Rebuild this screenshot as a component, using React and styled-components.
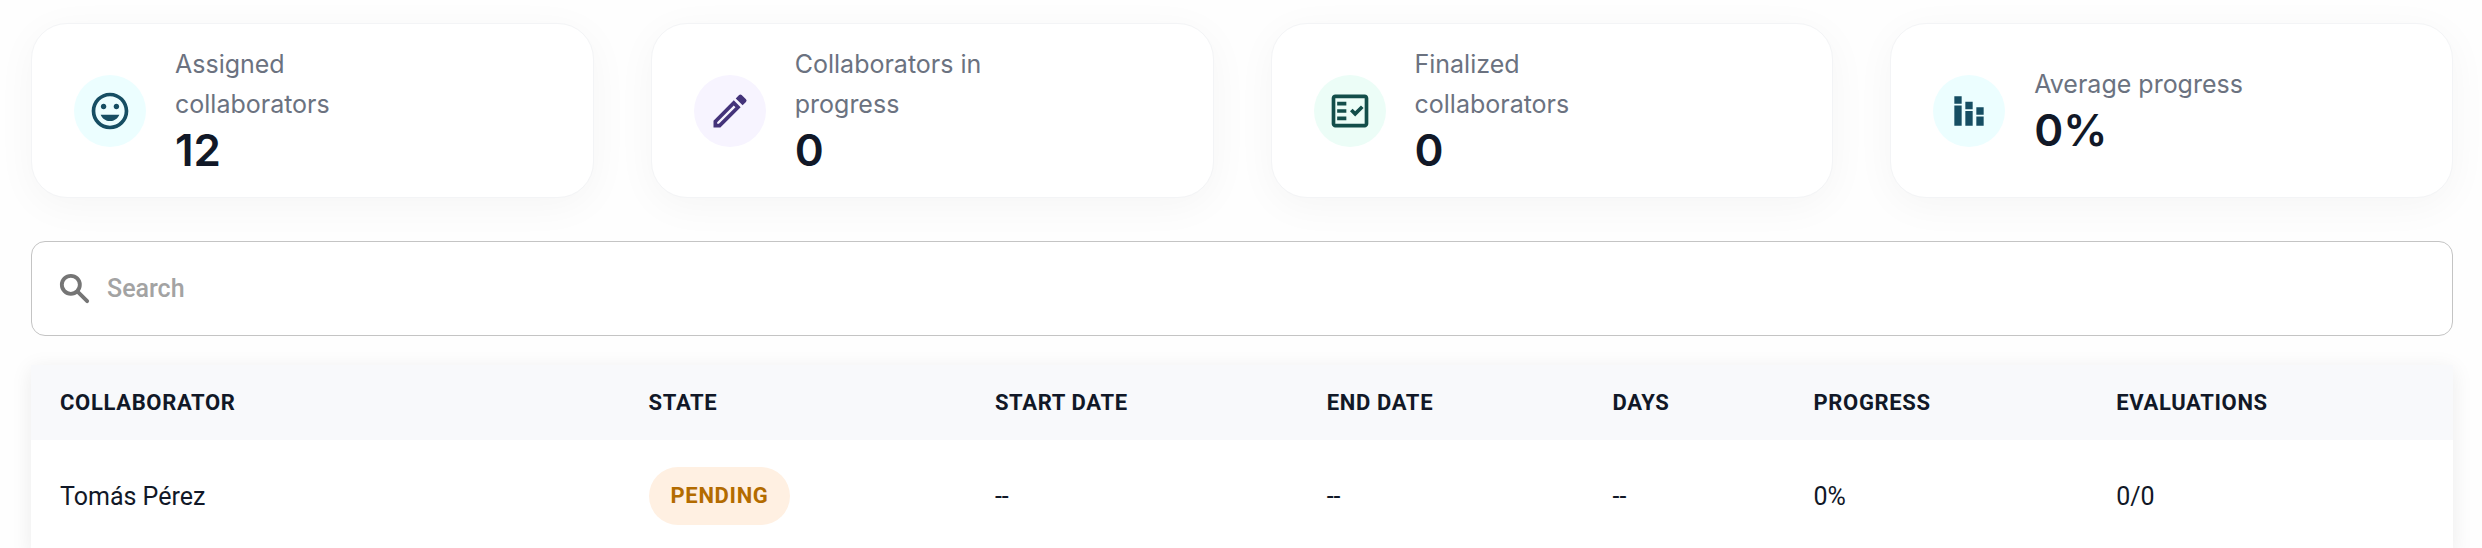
import React from "react"
import styled, { createGlobalStyle } from "styled-components"
import {
  MdMood,
  MdOutlineModeEdit,
  MdOutlineFactCheck,
  MdStackedBarChart,
} from "react-icons/md"

const GlobalStyle = createGlobalStyle`
  * {
    box-sizing: border-box;
  }
  body {
    margin: 0;
    background-color: #fefefe;
    font-family: Roboto, "Liberation Sans", sans-serif;
    color: #111827;
  }
`

const Page = styled.main`
  height: 100vh;
  overflow: hidden;
  padding: 23px 29px 0 31px;
`

const Cards = styled.section`
  display: grid;
  grid-template-columns: repeat(4, 1fr);
  gap: 57px;
  @media (max-width: 1300px) {
    grid-template-columns: repeat(2, 1fr);
  }
`

const Card = styled.article`
  display: flex;
  align-items: center;
  gap: 29px;
  padding: 20px 42px;
  background-color: white;
  border: 1px solid #f3f4f6;
  border-radius: 36px;
  box-shadow: 0 8px 40px rgba(0, 0, 0, 0.04);
`

const CardIcon = styled.span`
  flex: none;
  display: flex;
  align-items: center;
  justify-content: center;
  width: 72px;
  height: 72px;
  border-radius: 50%;
  font-size: 44px;
  color: ${props => props.$tint};
  background-color: ${props => props.$fill};
`

const CardText = styled.div`
  max-width: 224px;
`

const CardLabel = styled.p`
  margin: 0;
  font-family: Inter, "Liberation Sans", sans-serif;
  font-size: 25px;
  line-height: 40px;
  color: #6b7280;
`

const CardValue = styled.p`
  margin: 0;
  font-family: Inter, "Liberation Sans", sans-serif;
  font-size: 44px;
  font-weight: 600;
  line-height: 53px;
`

const SearchBox = styled.label`
  display: flex;
  align-items: center;
  gap: 12px;
  height: 95px;
  margin-top: 43px;
  padding: 0 23px;
  background-color: white;
  border: 1px solid #c4c4c4;
  border-radius: 14px;
  color: #757575;
`

const SearchGlyph = styled.svg`
  flex: none;
  width: 40px;
  height: 40px;
  fill: none;
  stroke: currentColor;
  stroke-width: 2.3;
  stroke-linecap: round;
`

const SearchInput = styled.input`
  flex: 1;
  min-width: 0;
  padding: 0;
  border: 0;
  outline: 0;
  background: none;
  font-family: inherit;
  font-size: 25px;
  font-weight: 500;
  color: #111827;
  &::placeholder {
    color: #a3a3a3;
    opacity: 1;
  }
`

const TableFrame = styled.section`
  margin-top: 29px;
  background-color: white;
  box-shadow: 0 4px 20px rgba(0, 0, 0, 0.08);
`

const Table = styled.table`
  width: 100%;
  table-layout: fixed;
  border-collapse: collapse;
`

const Col = styled.col`
  width: ${props => props.$share};
`

const HeadCell = styled.th`
  height: 75px;
  padding: 0 29px;
  background-color: #f8f9fb;
  font-size: 22px;
  font-weight: 700;
  letter-spacing: 0.03em;
  text-align: left;
`

const Cell = styled.td`
  height: 112px;
  padding: 0 29px;
  font-size: 25px;
`

const Chip = styled.span`
  display: inline-block;
  padding: 0 22px;
  border-radius: 29px;
  background-color: #fff0e2;
  font-size: 22px;
  font-weight: 700;
  letter-spacing: 0.03em;
  line-height: 58px;
  vertical-align: middle;
  color: #b36b00;
`

const stats = [
  { label: "Assigned collaborators", value: "12", Icon: MdMood, tint: "#164e63", fill: "#ecfeff" },
  { label: "Collaborators in progress", value: "0", Icon: MdOutlineModeEdit, tint: "#44337a", fill: "#f7f4ff" },
  { label: "Finalized collaborators", value: "0", Icon: MdOutlineFactCheck, tint: "#134e4a", fill: "#ecfdf7" },
  { label: "Average progress", value: "0%", Icon: MdStackedBarChart, tint: "#164e63", fill: "#ecfeff" },
]

const columns = [
  { title: "COLLABORATOR", share: "24.3%" },
  { title: "STATE", share: "14.3%" },
  { title: "START DATE", share: "13.7%" },
  { title: "END DATE", share: "11.8%" },
  { title: "DAYS", share: "8.3%" },
  { title: "PROGRESS", share: "12.5%" },
  { title: "EVALUATIONS", share: "15.1%" },
]

const rows = [
  {
    name: "Tomás Pérez",
    state: "PENDING",
    start: "--",
    end: "--",
    days: "--",
    progress: "0%",
    evaluations: "0/0",
  },
]

const App = () => (
  <>
    <GlobalStyle />
    <Page>
      <Cards>
        {stats.map(({ label, value, Icon, tint, fill }) => (
          <Card key={label}>
            <CardIcon $tint={tint} $fill={fill}>
              <Icon />
            </CardIcon>
            <CardText>
              <CardLabel>{label}</CardLabel>
              <CardValue>{value}</CardValue>
            </CardText>
          </Card>
        ))}
      </Cards>
      <SearchBox>
        <SearchGlyph viewBox="0 0 24 24" aria-hidden="true">
          <circle cx="9.5" cy="9.5" r="5.4" />
          <path d="M13.7 13.7l5.6 5.6" />
        </SearchGlyph>
        <SearchInput type="text" placeholder="Search" aria-label="Search" />
      </SearchBox>
      <TableFrame>
        <Table>
          <colgroup>
            {columns.map(({ title, share }) => (
              <Col key={title} $share={share} />
            ))}
          </colgroup>
          <thead>
            <tr>
              {columns.map(({ title }) => (
                <HeadCell key={title} scope="col">
                  {title}
                </HeadCell>
              ))}
            </tr>
          </thead>
          <tbody>
            {rows.map(row => (
              <tr key={row.name}>
                <Cell>{row.name}</Cell>
                <Cell>
                  <Chip>{row.state}</Chip>
                </Cell>
                <Cell>{row.start}</Cell>
                <Cell>{row.end}</Cell>
                <Cell>{row.days}</Cell>
                <Cell>{row.progress}</Cell>
                <Cell>{row.evaluations}</Cell>
              </tr>
            ))}
          </tbody>
        </Table>
      </TableFrame>
    </Page>
  </>
)

export default App
